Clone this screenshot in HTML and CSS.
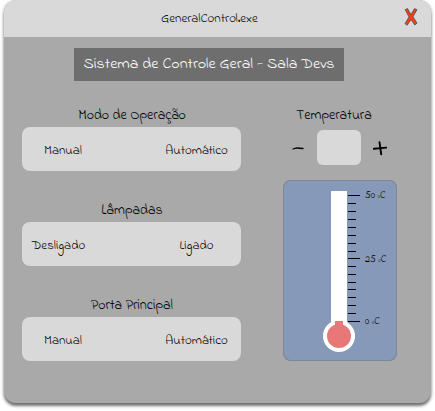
FILE: index.html
```html
<!DOCTYPE html>
<html lang="pt-BR">
<head>
<meta charset="utf-8">
<title>GeneralControl.exe</title>
<link rel="stylesheet" href="styles.css">
</head>
<body>
<main class="window">
  <header class="titlebar">
    <span class="app-name">GeneralControl.exe</span>
    <svg class="close" width="14" height="20" viewBox="0 0 14 20"><path d="M1.2 2.6 3.5 1.6 7 7.6 10.5 1.6 13 2.7 9 9.7 13 16.2 10.8 18 7 12.6 3.2 18.2 1 16.6 5 10Z" fill="#fa3c12" stroke="#46505a" stroke-width=".8"/></svg>
  </header>
  <h1 class="banner">Sistema de Controle Geral - Sala Devs</h1>
  <div class="content">
    <div class="controls">
      <section class="control">
        <h2 class="label">Modo de Operação</h2>
        <div class="options"><span class="option">Manual</span><span class="option">Automático</span></div>
      </section>
      <section class="control">
        <h2 class="label">Lâmpadas</h2>
        <div class="options"><span class="option off">Desligado</span><span class="option">Ligado</span></div>
      </section>
      <section class="control">
        <h2 class="label">Porta Principal</h2>
        <div class="options"><span class="option">Manual</span><span class="option">Automático</span></div>
      </section>
    </div>
    <section class="temperature">
      <h2 class="label">Temperatura</h2>
      <div class="stepper">
        <svg width="12" height="35" viewBox="0 0 12 35"><path d="M1 19 4.5 18 11 18.5" fill="none" stroke="#000" stroke-width="1.3" stroke-linecap="round"/></svg>
        <div class="display"></div>
        <svg width="14" height="35" viewBox="0 0 14 35"><path d="M.8 18.8 13.2 17.6M6.5 12.2 8.2 24.3" fill="none" stroke="#000" stroke-width="1.9" stroke-linecap="round"/></svg>
      </div>
      <div class="thermometer">
        <svg width="114" height="181" viewBox="0 0 114 181">
          <path d="M48 11H64V150H48Z" fill="#fff"/>
          <circle cx="56" cy="156" r="16" fill="#fff"/>
          <circle cx="56" cy="156" r="12" fill="#e87878"/>
          <path d="M52 141H60V150H52Z" fill="#e87878"/>
          <path d="M65 15.5H77M65 78.5H77M65 141.5H77M65 23.5H73M65 31.5H73M65 39.5H73M65 47.5H73M65 55.5H73M65 63.5H73M65 71.5H73M65 86.5H73M65 94.5H73M65 102.5H73M65 109.5H73M65 117.5H73M65 125.5H73M65 133.5H73" stroke="#000"/>
          <g class="scale">
            <text x="82" y="18">50 ºC</text>
            <text x="82" y="82">25 ºC</text>
            <text x="82" y="144">0 ºC</text>
          </g>
        </svg>
      </div>
    </section>
  </div>
</main>
</body>
</html>
```

FILE: styles.css
```css
* { box-sizing: border-box; }
html { min-height: 411px; background: #fff; }
body { margin: 0; min-height: 411px; color: #000; font-family: "Indie Flower", Lato, sans-serif; font-weight: 400; }
.window { width: 427px; height: 403px; margin: 0 4px; border-radius: 12px; background: #a9a9a9; box-shadow: 0 3px 3px rgba(0,0,0,.5), 0 1px 4px rgba(0,0,0,.18); overflow: hidden; }
.titlebar { height: 37px; background: #d9d9d9; display: grid; grid-template-columns: 1fr 14px; align-items: center; padding-right: 13px; }
.app-name { padding-left: 157px; font-size: 13px; line-height: 16px; }
.close { display: block; margin-top: -3px; }
.banner { width: 270px; height: 33px; margin: 11px 0 0 70px; background: #6e6e6e; color: #fff; font-size: 16px; font-weight: 400; line-height: 33px; text-align: center; white-space: nowrap; }
.content { display: flex; gap: 42px; padding: 24px 34px 0 18px; }
.controls { width: 219px; display: flex; flex-direction: column; gap: 29px; }
.label { margin: 0; height: 22px; padding-left: 1px; line-height: 22px; font-size: 14px; font-weight: 400; text-align: center; white-space: nowrap; }
.options { height: 44px; border-radius: 8px; background: #d9d9d9; display: grid; grid-template-columns: 82px 89px; justify-content: space-between; align-items: center; padding-top: 4px; }
.option { font-size: 13px; line-height: 18px; text-align: center; white-space: nowrap; }
.off { padding-right: 9px; }
.temperature { width: 114px; }
.temperature .label { height: 25px; padding: 0 12px 0 0; }
.stepper { height: 35px; display: flex; justify-content: space-between; padding: 0 10px 0 9px; }
.display { width: 44px; height: 35px; margin-left: 1px; border-radius: 6px; background: #d9d9d9; }
.thermometer { width: 114px; height: 181px; margin-top: 15px; border-radius: 8px; background: #8799b8; box-shadow: inset 0 0 0 1px #7c8798; }
.thermometer svg { display: block; }
.scale { font-size: 10px; fill: #000; }
```
